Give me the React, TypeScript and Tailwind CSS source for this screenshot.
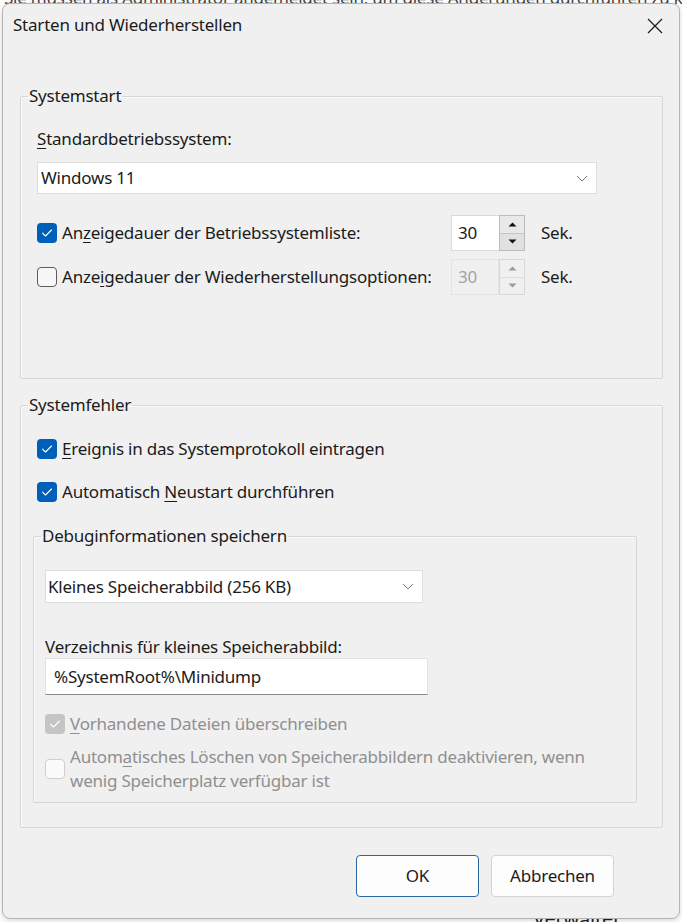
import React from "react";

const font = "font-['Segoe_UI','Noto_Sans',sans-serif]";

function CheckBox({ checked, disabled }: { checked?: boolean; disabled?: boolean }) {
  if (checked) {
    return (
      <span
        className={`flex h-[20px] w-[20px] shrink-0 items-center justify-center rounded-[4px] ${
          disabled ? "bg-[#c5c5c5]" : "bg-[#005fb8]"
        }`}
      >
        <svg width="12" height="10" viewBox="0 0 12 10" fill="none">
          <path d="M1.5 5.2 L4.5 8 L10.5 2" stroke="#fff" strokeWidth="1.1" strokeLinecap="round" strokeLinejoin="round" />
        </svg>
      </span>
    );
  }
  return (
    <span
      className={`h-[20px] w-[20px] shrink-0 rounded-[4px] border ${
        disabled ? "border-[#cfcfcf] bg-[#fbfbfb]" : "border-[#5c5c5c] bg-[#f7f7f7]"
      }`}
    />
  );
}

function Chevron() {
  return (
    <svg width="12" height="7" viewBox="0 0 12 7" fill="none">
      <path d="M1 1 L6 6 L11 1" stroke="#7a7a7a" strokeWidth="1" />
    </svg>
  );
}

function Tri({ up, color }: { up?: boolean; color: string }) {
  return (
    <svg width="9" height="5" viewBox="0 0 9 5">
      <path d={up ? "M0.5 4.5 L4.5 0.5 L8.5 4.5 Z" : "M0.5 0.5 L4.5 4.5 L8.5 0.5 Z"} fill={color} />
    </svg>
  );
}

function Spinner({ disabled }: { disabled?: boolean }) {
  return (
    <div className="flex h-[36px] w-[74px]">
      <div
        className={`flex w-[48px] items-center border pl-[6px] ${
          disabled
            ? "border-[#e3e3e3] bg-[#f0f0f0] text-[#a3a3a3]"
            : "border-[#dadada] border-r-0 bg-white text-[#1b1b1b]"
        }`}
      >
        30
      </div>
      <div
        className={`flex w-[26px] flex-col border ${
          disabled ? "border-[#d8d8d8]" : "border-[#bdbdbd]"
        }`}
      >
        <div
          className={`flex flex-1 items-center justify-center border-b ${
            disabled ? "border-[#dedede] bg-[#f0f0f0]" : "border-[#c4c4c4] bg-[#e9e9e9]"
          }`}
        >
          <Tri up color={disabled ? "#9a9a9a" : "#111"} />
        </div>
        <div
          className={`flex flex-1 items-center justify-center ${
            disabled ? "bg-[#f0f0f0]" : "bg-[#e1e1e1]"
          }`}
        >
          <Tri color={disabled ? "#9a9a9a" : "#111"} />
        </div>
      </div>
    </div>
  );
}

export default function App() {
  return (
    <div className={`relative h-[922px] w-[682px] overflow-hidden bg-white ${font} text-[17px] tracking-[-0.22px] text-[#1b1b1b]`}>
      {/* page content lying behind the dialog */}
      <div className="absolute left-[4px] top-[-15px] whitespace-nowrap text-[17px] text-[#444]">
        Sie müssen als Administrator angemeldet sein, um diese Änderungen durchführen zu können. Leistung
      </div>
      <div className="absolute left-[533px] top-[904px] text-[20px] text-[#222]">Verwaltet</div>

      {/* dialog window */}
      <div className="absolute left-[2px] top-[3px] flex h-[916px] w-[678px] flex-col rounded-[8px] border border-[#b4b4b4] bg-[#f0f0f0] shadow-[0_2px_6px_rgba(0,0,0,0.15)]">
        {/* title bar */}
        <div className="flex h-[42px] shrink-0 items-center justify-between pl-[10px] pr-[16px]">
          <span className="leading-[22px]">Starten und Wiederherstellen</span>
          <svg width="16" height="16" viewBox="0 0 16 16" fill="none" className="mt-[1px]">
            <path d="M1 1 L15 15 M15 1 L1 15" stroke="#1b1b1b" strokeWidth="1.2" />
          </svg>
        </div>

        {/* Systemstart */}
        <fieldset className="m-0 ml-[17px] mt-[39px] h-[294px] w-[643px] min-w-0 rounded-[2px] border border-[#d6d6d6] p-0 shadow-[inset_1px_1px_0_#fbfbfb]">
          <legend className="ml-[7px] px-[1px] leading-[22px]">Systemstart</legend>
          <div className="flex flex-col pl-[16px] pt-[21px]">
            <div className="leading-[22px]">
              <span className="underline underline-offset-[3px] decoration-1">S</span>tandardbetriebssystem:
            </div>
            <div className="mt-[12px] flex h-[32px] w-[560px] items-center justify-between border border-[#dedede] bg-white pl-[3px] pr-[8px]">
              <span>Windows 11</span>
              <Chevron />
            </div>

            <div className="mt-[21px] flex h-[36px] items-center">
              <div className="flex w-[414px] items-center gap-[5px]">
                <CheckBox checked />
                <span>
                  An<span className="underline underline-offset-[3px] decoration-1">z</span>eigedauer der Betriebssystemliste:
                </span>
              </div>
              <Spinner />
              <span className="ml-[16px]">Sek.</span>
            </div>

            <div className="mt-[8px] flex h-[36px] items-center">
              <div className="flex w-[414px] items-center gap-[5px]">
                <CheckBox />
                <span>
                  Anze<span className="underline underline-offset-[3px] decoration-1">i</span>gedauer der Wiederherstellungsoptionen:
                </span>
              </div>
              <Spinner disabled />
              <span className="ml-[16px]">Sek.</span>
            </div>
          </div>
        </fieldset>

        {/* Systemfehler */}
        <fieldset className="m-0 ml-[17px] mt-[15px] h-[434px] w-[643px] min-w-0 rounded-[2px] border border-[#d6d6d6] p-0 shadow-[inset_1px_1px_0_#fbfbfb]">
          <legend className="ml-[7px] px-[1px] leading-[22px]">Systemfehler</legend>
          <div className="flex flex-col pl-[12px] pt-[22px]">
            <div className="flex h-[22px] items-center gap-[5px] pl-[4px]">
              <CheckBox checked />
              <span>
                <span className="underline underline-offset-[3px] decoration-1">E</span>reignis in das Systemprotokoll eintragen
              </span>
            </div>
            <div className="mt-[21px] flex h-[22px] items-center gap-[5px] pl-[4px]">
              <CheckBox checked />
              <span>
                Automatisch <span className="underline underline-offset-[3px] decoration-1">N</span>eustart durchführen
              </span>
            </div>

            {/* Debuginformationen speichern */}
            <fieldset className="m-0 mt-[22px] h-[278px] w-[604px] min-w-0 rounded-[2px] border border-[#d6d6d6] p-0 shadow-[inset_1px_1px_0_#fbfbfb]">
              <legend className="ml-[7px] px-[1px] leading-[22px]">Debuginformationen speichern</legend>
              <div className="flex flex-col pl-[11px] pt-[23px]">
                <div className="flex h-[33px] w-[378px] items-center justify-between border border-[#dedede] bg-white pl-[2px] pr-[8px]">
                  <span>Kleines Speicherabbild (256 KB)</span>
                  <Chevron />
                </div>
                <div className="mt-[33px] leading-[22px]">Verzeichnis für kleines Speicherabbild:</div>
                <div className="flex h-[37px] w-[383px] items-center border border-[#e2e2e2] border-b-[#8a8a8a] bg-white pl-[8px]">
                  %SystemRoot%\Minidump
                </div>
                <div className="mt-[18px] flex h-[22px] items-center gap-[5px] text-[#8f8f8f]">
                  <CheckBox checked disabled />
                  <span>
                    <span className="underline underline-offset-[3px] decoration-1">V</span>orhandene Dateien überschreiben
                  </span>
                </div>
                <div className="mt-[10px] flex items-center gap-[5px] text-[#8f8f8f]">
                  <CheckBox disabled />
                  <span className="leading-[24px]">
                    Autom<span className="underline underline-offset-[3px] decoration-1">a</span>tisches Löschen von Speicherabbildern deaktivieren, wenn
                    <br />
                    wenig Speicherplatz verfügbar ist
                  </span>
                </div>
              </div>
            </fieldset>
          </div>
        </fieldset>

        {/* dialog buttons */}
        <div className="mt-[27px] flex justify-end gap-[12px] pr-[65px]">
          <button className="flex h-[42px] w-[123px] items-center justify-center rounded-[4px] border border-[#2a66a3] bg-[#fdfdfd]">
            OK
          </button>
          <button className="flex h-[42px] w-[123px] items-center justify-center rounded-[4px] border border-[#d3d3d3] bg-[#fdfdfd]">
            Abbrechen
          </button>
        </div>
      </div>
    </div>
  );
}
